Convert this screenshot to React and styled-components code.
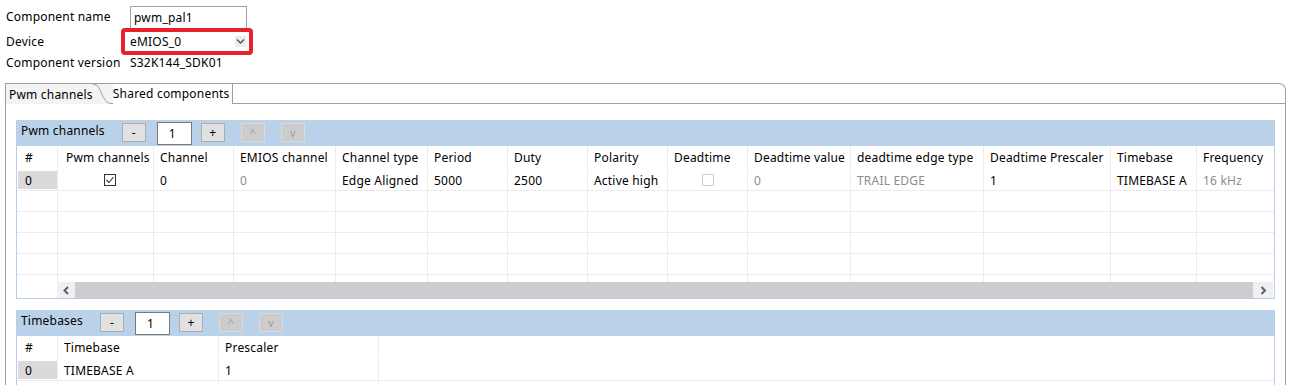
import React from 'react';
import styled, { createGlobalStyle } from 'styled-components';

const GlobalStyle = createGlobalStyle`
  body {
    margin: 0;
    background: #ffffff;
    font-family: "Noto Sans", "Noto Sans CJK SC", sans-serif;
    font-size: 12px;
    letter-spacing: 0.2px;
    color: #000;
  }
  * { box-sizing: border-box; }
`;

const Page = styled.div`
  width: 1292px;
  height: 385px;
  overflow: hidden;
`;

const Form = styled.div`
  display: grid;
  grid-template-columns: 124px auto;
  grid-template-rows: 22px 27px 16px;
  align-items: center;
  padding: 6px 0 0 6px;
`;

const Label = styled.div`
  line-height: 16px;
  white-space: nowrap;
`;

const TextInput = styled.div`
  align-self: start;
  width: 117px;
  height: 23px;
  border: 1px solid #a3a3a3;
  padding-left: 3px;
  line-height: 21px;
`;

const Highlight = styled.div`
  margin-left: -9px;
  width: 132px;
  height: 27px;
  border: 4px solid #e8202a;
  border-radius: 4px;
  padding: 1px 2px;
`;

const Select = styled.div`
  height: 17px;
  background: #fff;
  display: flex;
  align-items: center;
  justify-content: space-between;
  padding: 0 1px 0 3px;
  line-height: 17px;
`;

const SelectArrow = styled.div`
  width: 11px;
  height: 11px;
  background: #ececec;
  display: flex;
  align-items: center;
  justify-content: center;
`;

const Frame = styled.div`
  margin: 12px 6px 0 5px;
  border: 1px solid #a0a0a0;
  border-bottom: none;
  border-top-right-radius: 7px;
  padding-bottom: 40px;
`;

const TabRow = styled.div`
  display: flex;
  height: 20px;
  margin-bottom: 16px;
`;

const ActiveTab = styled.div`
  display: flex;
  align-items: center;
  background: #f3f3f3;
  padding-left: 3px;
  line-height: 19px;
  height: 20px;
`;

const Tab = styled.div`
  padding: 0 3px 0 0;
  line-height: 19px;
  height: 20px;
  border-right: 1px solid #a0a0a0;
`;

const TabFill = styled.div`
  flex: 1;
  border-bottom: 1px solid #a0a0a0;
`;

const Section = styled.div`
  margin: ${p => (p.$top ? '11px' : '0')} 10px 0 10px;
  border: 1px solid #b7cfea;
  border-top: none;
  overflow: hidden;
`;

const SectionHeader = styled.div`
  height: 26px;
  background: #bad1ea;
  display: flex;
  align-items: flex-start;
  padding: 2px 0 0 4px;
`;

const SectionTitle = styled.div`
  line-height: 17px;
  margin-right: 17px;
`;

const Btn = styled.div`
  width: 24px;
  height: 19px;
  margin-top: 1px;
  margin-left: ${p => p.$gap || 0}px;
  border: 1px solid ${p => (p.$disabled ? '#dadada' : '#adadad')};
  background: ${p => (p.$disabled ? '#cccccc' : '#e1e1e1')};
  color: ${p => (p.$disabled ? '#9a9a9a' : '#000')};
  font-size: ${p => (p.$disabled ? '10px' : '12px')};
  display: flex;
  align-items: center;
  justify-content: center;
  line-height: 1;
`;

const Counter = styled.div`
  width: 35px;
  height: 23px;
  margin-left: 11px;
  border: 1px solid #7a7a7a;
  background: #fff;
  display: flex;
  align-items: center;
  justify-content: center;
  padding-right: 4px;
`;

const Grid = styled.div`
  height: ${p => p.$height}px;
  overflow: hidden;
`;

const Row = styled.div`
  display: grid;
  grid-template-columns: ${p => p.$cols};
  height: ${p => p.$h}px;
  border-bottom: 1px solid ${p => (p.$head ? 'transparent' : '#ececec')};
  width: max-content;
  min-width: 100%;
`;

const Cell = styled.div`
  border-right: 1px solid #ececec;
  padding: 1px 0 0 ${p => p.$pad ?? 6}px;
  display: flex;
  align-items: center;
  justify-content: ${p => (p.$center ? 'center' : 'flex-start')};
  color: ${p => (p.$muted ? '#8c8c8c' : '#000')};
  white-space: nowrap;
  overflow: hidden;
`;

const RowHead = styled(Cell)`
  padding: 0;
  align-items: stretch;
`;

const RowHeadInner = styled.div`
  flex: 1;
  margin: 2px 0 1px 1px;
  background: #dadada;
  padding: 1px 0 0 7px;
  display: flex;
  align-items: center;
`;

const Check = styled.div`
  width: 12px;
  height: 12px;
  border: 1px solid ${p => (p.$disabled ? '#cfcfcf' : '#333')};
  background: #fff;
  display: flex;
  align-items: center;
  justify-content: center;
`;

const ScrollBar = styled.div`
  display: flex;
  height: 16px;
  padding-right: 1px;
`;

const ScrollSpacer = styled.div`
  width: 40px;
  background: #fff;
`;

const ScrollButton = styled.div`
  width: ${p => p.$w}px;
  background: #f0f0f0;
  display: flex;
  align-items: center;
  justify-content: center;
`;

const ScrollTrack = styled.div`
  flex: 1;
  background: #cdcdcd;
`;

const Chevron = ({ dir }) => {
  const d = dir === 'left' ? 'M6 1 L2.5 4.5 L6 8' : 'M2.5 1 L6 4.5 L2.5 8';
  return (
    <svg width="9" height="9" viewBox="0 0 9 9">
      <path d={d} fill="none" stroke="#606060" strokeWidth="2" />
    </svg>
  );
};

const CheckMark = () => (
  <svg width="10" height="10" viewBox="0 0 10 10">
    <path d="M1.5 5 L4 7.5 L8.5 2" fill="none" stroke="#333" strokeWidth="1.1" />
  </svg>
);

const pwmCols = '41px 96px 80px 102px 92px 80px 80px 80px 80px 103px 133px 127px 86px 90px';
const pwmHead = [
  '#', 'Pwm channels', 'Channel', 'EMIOS channel', 'Channel type', 'Period', 'Duty',
  'Polarity', 'Deadtime', 'Deadtime value', 'deadtime edge type', 'Deadtime Prescaler',
  'Timebase', 'Frequency',
];

const tbCols = '41px 161px 160px';

function Controls() {
  return (
    <>
      <Btn>-</Btn>
      <Counter>1</Counter>
      <Btn $gap={9}>+</Btn>
      <Btn $gap={16} $disabled>^</Btn>
      <Btn $gap={16} $disabled>v</Btn>
    </>
  );
}

function EmptyRows({ cols, count, n }) {
  return Array.from({ length: count }).map((_, i) => (
    <Row key={i} $cols={cols} $h={21}>
      {Array.from({ length: n }).map((__, j) => <Cell key={j} />)}
    </Row>
  ));
}

export default function App() {
  return (
    <Page>
      <GlobalStyle />
      <Form>
        <Label>Component name</Label>
        <TextInput>pwm_pal1</TextInput>
        <Label>Device</Label>
        <Highlight>
          <Select>
            eMIOS_0
            <SelectArrow>
              <svg width="9" height="7" viewBox="0 0 9 7">
                <path d="M1 1.5 L4.5 5 L8 1.5" fill="none" stroke="#555" strokeWidth="1.4" />
              </svg>
            </SelectArrow>
          </Select>
        </Highlight>
        <Label>Component version</Label>
        <Label>S32K144_SDK01</Label>
      </Form>

      <Frame>
        <TabRow>
          <ActiveTab>
            Pwm channels
            <svg width="20" height="20" viewBox="0 0 20 20">
              <path d="M0 0 L2 0 C8 0 9 19 18 19 L20 19 L20 20 L0 20 Z" fill="#f3f3f3" />
              <path d="M0 0.5 L2 0.5 C8 0.5 9 19.5 18 19.5 L20 19.5" fill="none" stroke="#a0a0a0" />
            </svg>
          </ActiveTab>
          <Tab>Shared components</Tab>
          <TabFill />
        </TabRow>

        <Section>
          <SectionHeader>
            <SectionTitle>Pwm channels</SectionTitle>
            <Controls />
          </SectionHeader>
          <Grid $height={136}>
            <Row $cols={pwmCols} $h={23} $head>
              {pwmHead.map((h, i) => (
                <Cell key={h} $pad={i < 2 ? 8 : 6}>{h}</Cell>
              ))}
            </Row>
            <Row $cols={pwmCols} $h={22}>
              <RowHead><RowHeadInner>0</RowHeadInner></RowHead>
              <Cell $center $pad={9}><Check><CheckMark /></Check></Cell>
              <Cell>0</Cell>
              <Cell $muted>0</Cell>
              <Cell>Edge Aligned</Cell>
              <Cell>5000</Cell>
              <Cell>2500</Cell>
              <Cell>Active high</Cell>
              <Cell $center $pad={0}><Check $disabled /></Cell>
              <Cell $muted>0</Cell>
              <Cell $muted>TRAIL EDGE</Cell>
              <Cell>1</Cell>
              <Cell>TIMEBASE A</Cell>
              <Cell $muted>16 kHz</Cell>
            </Row>
            <EmptyRows cols={pwmCols} count={5} n={14} />
          </Grid>
          <ScrollBar>
            <ScrollSpacer />
            <ScrollButton $w={18}><Chevron dir="left" /></ScrollButton>
            <ScrollTrack />
            <ScrollButton $w={20}><Chevron dir="right" /></ScrollButton>
          </ScrollBar>
        </Section>

        <Section $top>
          <SectionHeader>
            <SectionTitle>Timebases</SectionTitle>
            <Controls />
          </SectionHeader>
          <Grid $height={80}>
            <Row $cols={tbCols} $h={23} $head>
              <Cell $pad={8}>#</Cell>
              <Cell>Timebase</Cell>
              <Cell>Prescaler</Cell>
            </Row>
            <Row $cols={tbCols} $h={22}>
              <RowHead><RowHeadInner>0</RowHeadInner></RowHead>
              <Cell>TIMEBASE A</Cell>
              <Cell>1</Cell>
            </Row>
            <EmptyRows cols={tbCols} count={2} n={3} />
          </Grid>
        </Section>
      </Frame>
    </Page>
  );
}
